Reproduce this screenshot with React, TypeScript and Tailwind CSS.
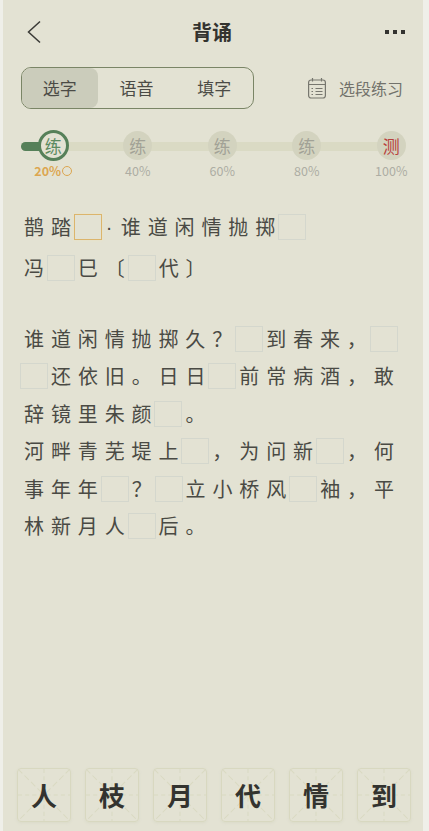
const cjk = "font-['Noto_Sans_CJK_SC','Noto_Sans',sans-serif]";

const steps = [
  { char: "练", label: "20%", active: true },
  { char: "练", label: "40%" },
  { char: "练", label: "60%" },
  { char: "练", label: "80%" },
  { char: "测", label: "100%", test: true },
];

const rows = [
  { text: "鹊踏#·谁道闲情抛掷_", cls: "" },
  { text: "冯_巳〔_代〕", cls: "mt-[3.5px]" },
  { text: "谁道闲情抛掷久？_到春来，_", cls: "mt-[33.5px]" },
  { text: "_还依旧。日日_前常病酒，敢", cls: "" },
  { text: "辞镜里朱颜_。", cls: "" },
  { text: "河畔青芜堤上_，为问新_，何", cls: "" },
  { text: "事年年_？_立小桥风_袖，平", cls: "" },
  { text: "林新月人_后。", cls: "" },
];

const tiles = ["人", "枝", "月", "代", "情", "到"];

const Blank = ({ active }: { active?: boolean }) => (
  <span
    className={
      active
        ? "ml-[-4px] mr-[3px] h-[26px] w-[28px] shrink-0 border-[1.5px] border-[#dcb56c] shadow-[0_0_3px_#ece3c0]"
        : "ml-[-4px] mr-[3px] h-[26px] w-[28px] shrink-0 border-[1.5px] border-[#d4d7cd]"
    }
  />
);

const Row = ({ text, cls }: { text: string; cls: string }) => (
  <div className={`flex h-[37.5px] items-center ${cls}`}>
    {text.split("").map((c, i) => {
      if (c === "_") return <Blank key={i} />;
      if (c === "#") return <Blank key={i} active />;
      if (c === "·") {
        return (
          <span key={i} className="w-[16px] shrink-0 pl-[1px] font-['Liberation_Sans',sans-serif]">
            {c}
          </span>
        );
      }
      return (
        <span key={i} className="w-[26.9px] shrink-0 whitespace-nowrap">
          {c}
        </span>
      );
    })}
  </div>
);

const Tile = ({ char }: { char: string }) => (
  <div className="relative flex h-[54px] w-[54px] items-center justify-center rounded-[4px] border-[1.5px] border-[#d8d8c0] text-[26px] font-bold leading-none text-[#33332f] shadow-[0_1px_3px_#dadac8]">
    <svg className="absolute inset-0 h-full w-full" viewBox="0 0 51 51" fill="none" stroke="#d9d9c2" strokeWidth="1">
      <path d="M0 0L51 51M51 0L0 51" strokeDasharray="6 3" />
      <path d="M25.5 0V51M0 25.5H51" strokeDasharray="4 3" />
    </svg>
    <span className="relative">{char}</span>
  </div>
);

export default function App() {
  return (
    <div className={`h-screen w-full overflow-hidden bg-[#efefe9] ${cjk}`}>
      <div className="ml-[3px] flex h-full w-[420px] flex-col bg-[#e3e2d3]">
        {/* Header */}
        <div className="flex h-[64px] shrink-0 items-center justify-between pl-[24px] pr-[18px]">
          <svg className="h-[24px] w-[14px]" viewBox="0 0 14 24" fill="none" stroke="#3a3a36" strokeWidth="1.5">
            <path d="M13 1.5L1.5 12L13 22.5" />
          </svg>
          <h1 className="pr-[2px] text-[20px] font-bold text-[#33332f]">背诵</h1>
          <div className="flex gap-[4px]">
            <span className="h-[4px] w-[4px] bg-[#33332f]" />
            <span className="h-[4px] w-[4px] bg-[#33332f]" />
            <span className="h-[4px] w-[4px] bg-[#33332f]" />
          </div>
        </div>

        {/* Mode tabs */}
        <div className="mt-[3px] flex items-center pl-[18px]">
          <div className="flex h-[42px] w-[233px] overflow-hidden rounded-[10px] border-[1.5px] border-[#7a8566] text-[17px] text-[#4b4b46]">
            <div className="flex w-[76px] items-center justify-center rounded-[8px] bg-[#cbccbb]">选字</div>
            <div className="flex w-[78px] items-center justify-center">语音</div>
            <div className="flex w-[78px] items-center justify-center">填字</div>
          </div>
          <svg className="ml-[54px] h-[22px] w-[18px]" viewBox="0 0 18 22" fill="none" stroke="#77776f" strokeWidth="1.2">
            <rect x="0.6" y="3" width="16.8" height="18" rx="2.5" />
            <path d="M0.6 7.5H17.4M4.5 1V4.5M13.5 1V4.5" />
            <path d="M3.5 11.5H5M7.5 11.5H14.5M3.5 14.5H5M7.5 14.5H14.5M3.5 17.5H5M7.5 17.5H14.5" />
          </svg>
          <span className="ml-[13px] whitespace-nowrap text-[16px] text-[#72726b]">选段练习</span>
        </div>

        {/* Progress */}
        <div className="relative mt-[21px] flex pl-[8px]">
          <div className="absolute left-[18px] top-[11.5px] h-[9px] w-[370px] rounded-full bg-[#dadac4]">
            <div className="h-full w-[28px] rounded-full bg-[#568059]" />
          </div>
          {steps.map((s) => (
            <div key={s.label} className="relative flex w-[84.5px] shrink-0 flex-col items-center">
              {s.active ? (
                <div className="flex h-[31px] w-[31px] items-center justify-center rounded-full border-[3px] border-[#568059] bg-[#e3e2d3] text-[17px] text-[#5c8a60]">
                  {s.char}
                </div>
              ) : (
                <div
                  className={
                    s.test
                      ? "my-[1px] flex h-[29px] w-[29px] items-center justify-center rounded-full bg-[#d3d3bf] text-[17px] text-[#b8403c]"
                      : "my-[1px] flex h-[29px] w-[29px] items-center justify-center rounded-full bg-[#d3d3bf] text-[17px] text-[#a2a296]"
                  }
                >
                  {s.char}
                </div>
              )}
              {s.active ? (
                <div className="mt-[2px] flex h-[16px] items-center gap-[1px] text-[12.5px] font-bold text-[#dca650]">
                  {s.label}
                  <span className="h-[10px] w-[10px] rounded-full border-[1.5px] border-[#dca650]" />
                </div>
              ) : (
                <div className="mt-[2px] flex h-[16px] items-center text-[12.5px] text-[#adada3]">{s.label}</div>
              )}
            </div>
          ))}
        </div>

        {/* Verse */}
        <div className="mt-[29px] pl-[21px] text-[20px] leading-none text-[#4a4a44]">
          {rows.map((r, i) => (
            <Row key={i} text={r.text} cls={r.cls} />
          ))}
        </div>

        {/* Answer tiles */}
        <div className="mt-auto mb-[9px] flex gap-[14px] pl-[14px]">
          {tiles.map((t) => (
            <Tile key={t} char={t} />
          ))}
        </div>
      </div>
    </div>
  );
}
